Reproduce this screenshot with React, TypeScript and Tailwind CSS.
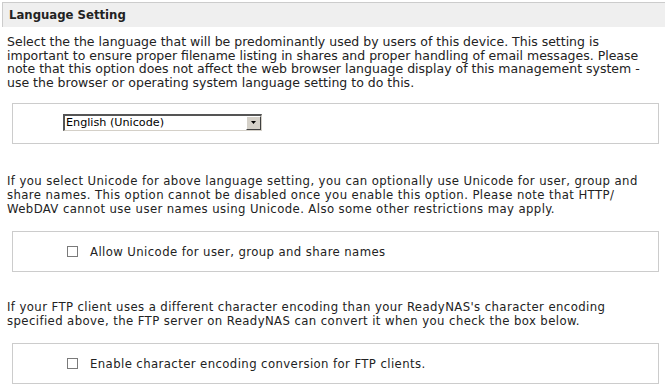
import React from 'react';

const verdana = "font-['DejaVu_Sans',Verdana,sans-serif]";
const tahoma = "font-['DejaVu_Sans_Condensed',Tahoma,sans-serif]";

const Checkbox: React.FC = () => (
  <span className="inline-block w-[11px] h-[11px] border border-[#7a7a7a] bg-white shrink-0" />
);

const FakeSelect: React.FC<{ value: string }> = ({ value }) => (
  <div className="flex w-[199px] h-[17px] bg-white border-t-2 border-l-2 border-b border-r border-t-[#555] border-l-[#555] border-b-[#d4d0c8] border-r-[#d4d0c8]">
    <span className={`flex-1 pl-[1px] text-[11.2px] leading-[14px] text-black ${verdana}`}>{value}</span>
    <span className="w-[15px] h-[14px] bg-[#d4d0c8] border border-t-white border-l-white border-b-[#404040] border-r-[#404040] flex items-center justify-center">
      <svg width="5" height="3" viewBox="0 0 5 3">
        <path d="M0 0h5L2.5 3z" fill="#000" />
      </svg>
    </span>
  </div>
);

export default function App() {
  return (
    <div className="w-[665px] h-[385px] bg-white overflow-hidden text-[#222]">
      <div className="mt-[2px] ml-[2px] h-[25px] bg-[#efefef] border-t border-l border-[#cccccc]">
        <h2 className={`pl-[6px] text-[11.7px] leading-[24px] font-bold text-[#222] ${verdana}`}>
          Language Setting
        </h2>
      </div>

      <p className={`mt-[8px] px-[7px] text-[12.5px] leading-[13.7px] whitespace-nowrap ${verdana}`}>
        Select the the language that will be predominantly used by users of this device. This setting is
        <br />
        important to ensure proper filename listing in shares and proper handling of email messages. Please
        <br />
        note that this option does not affect the web browser language display of this management system -
        <br />
        use the browser or operating system language setting to do this.
      </p>

      <div className="mt-[13px] ml-[12px] w-[647px] h-[41px] border border-[#cccccc] pt-[10px] pl-[50px]">
        <FakeSelect value="English (Unicode)" />
      </div>

      <p className={`mt-[30px] px-[7px] text-[13px] leading-[14px] tracking-[0.4px] whitespace-nowrap ${tahoma}`}>
        If you select Unicode for above language setting, you can optionally use Unicode for user, group and
        <br />
        share names. This option cannot be disabled once you enable this option. Please note that HTTP/
        <br />
        WebDAV cannot use user names using Unicode. Also some other restrictions may apply.
      </p>

      <div className="mt-[15px] ml-[12px] w-[647px] h-[41px] border border-[#cccccc] flex items-center pl-[54px] gap-[12px]">
        <Checkbox />
        <span className={`text-[13px] tracking-[0.4px] ${tahoma}`}>Allow Unicode for user, group and share names</span>
      </div>

      <p className={`mt-[28px] px-[7px] text-[13px] leading-[14px] tracking-[0.4px] whitespace-nowrap ${tahoma}`}>
        If your FTP client uses a different character encoding than your ReadyNAS's character encoding
        <br />
        specified above, the FTP server on ReadyNAS can convert it when you check the box below.
      </p>

      <div className="mt-[15px] ml-[12px] w-[647px] h-[41px] border border-[#cccccc] flex items-center pl-[54px] gap-[12px]">
        <Checkbox />
        <span className={`text-[13px] tracking-[0.4px] ${tahoma}`}>Enable character encoding conversion for FTP clients.</span>
      </div>
    </div>
  );
}
